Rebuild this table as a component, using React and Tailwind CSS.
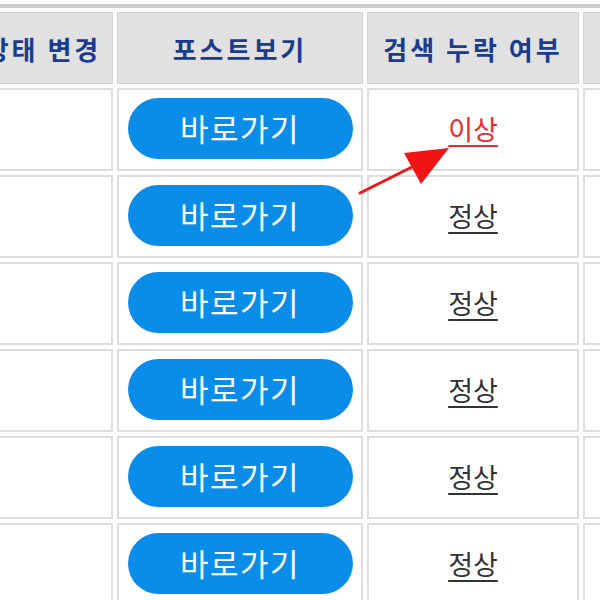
const rows = ['이상', '정상', '정상', '정상', '정상', '정상'];

const font = { fontFamily: '"Noto Sans CJK KR", "Noto Sans", sans-serif' };

export default function App() {
  return (
    <div className="relative w-[600px] h-[600px] overflow-hidden bg-white pt-[4px]" style={font}>
      <table className="table-fixed border-separate border-spacing-[4px] border-t-4 border-[#cfcfcf] -ml-[31px] w-[830px]">
        <thead>
          <tr className="h-[72px]">
            {['상태 변경', '포스트보기', '검색 누락 여부', ''].map((h, i) => (
              <th
                key={i}
                className={
                  'bg-[#e1e1e1] border border-[#d2d2d2] text-[#1b3c8e] text-[26px] font-bold tracking-[3px] text-center align-middle whitespace-nowrap ' +
                  ['w-[140px]', 'w-[246px]', 'w-[212px]', 'w-[212px]'][i]
                }
              >
                {h}
              </th>
            ))}
          </tr>
        </thead>
        <tbody>
          {rows.map((r, i) => (
            <tr key={i} className="h-[83px]">
              <td className="border-2 border-[#dedede]"></td>
              <td className="border-2 border-[#dedede] text-center align-middle">
                <button className="w-[225px] h-[61px] rounded-full bg-[#0a8ce9] text-white text-[31px] tracking-[1.5px] -mt-[3px] align-middle">
                  바로가기
                </button>
              </td>
              <td className="border-2 border-[#dedede] text-center align-middle">
                <span
                  className={
                    'text-[27px] underline underline-offset-[5px] ' +
                    (r === '이상' ? 'text-[#ea2a2f]' : 'text-[#333333]')
                  }
                >
                  {r}
                </span>
              </td>
              <td className="border-2 border-[#dedede]"></td>
            </tr>
          ))}
        </tbody>
      </table>
      <svg className="absolute inset-0 pointer-events-none" width="600" height="600" viewBox="0 0 600 600">
        <line x1="360" y1="193" x2="420" y2="163" stroke="#f01414" strokeWidth="3" strokeLinecap="round" />
        <polygon points="449,148 404,153 421,184" fill="#f01414" />
      </svg>
    </div>
  );
}
